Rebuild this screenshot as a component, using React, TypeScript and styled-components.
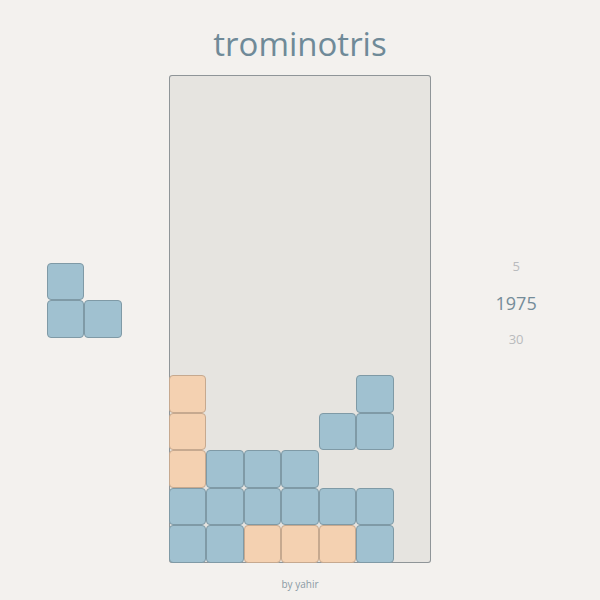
import React from 'react'
import styled, { createGlobalStyle } from 'styled-components'

const CELL = 37.5

type Kind = 'blue' | 'orange'

const board: { row: number; col: number; kind: Kind }[] = [
  { row: 8, col: 0, kind: 'orange' },
  { row: 8, col: 5, kind: 'blue' },
  { row: 9, col: 0, kind: 'orange' },
  { row: 9, col: 4, kind: 'blue' },
  { row: 9, col: 5, kind: 'blue' },
  { row: 10, col: 0, kind: 'orange' },
  { row: 10, col: 1, kind: 'blue' },
  { row: 10, col: 2, kind: 'blue' },
  { row: 10, col: 3, kind: 'blue' },
  { row: 11, col: 0, kind: 'blue' },
  { row: 11, col: 1, kind: 'blue' },
  { row: 11, col: 2, kind: 'blue' },
  { row: 11, col: 3, kind: 'blue' },
  { row: 11, col: 4, kind: 'blue' },
  { row: 11, col: 5, kind: 'blue' },
  { row: 12, col: 0, kind: 'blue' },
  { row: 12, col: 1, kind: 'blue' },
  { row: 12, col: 2, kind: 'orange' },
  { row: 12, col: 3, kind: 'orange' },
  { row: 12, col: 4, kind: 'orange' },
  { row: 12, col: 5, kind: 'blue' },
]

const next: { row: number; col: number }[] = [
  { row: 0, col: 0 },
  { row: 1, col: 0 },
  { row: 1, col: 1 },
]

const GlobalStyle = createGlobalStyle`
  html, body {
    margin: 0;
    padding: 0;
    background: #f3f1ee;
    font-family: "Open Sans", "Noto Sans", sans-serif;
  }
`

const Page = styled.div`
  display: grid;
  grid-template-columns: 1fr 262.5px 1fr;
  height: 600px;
`

const Middle = styled.div`
  display: flex;
  flex-direction: column;
  align-items: center;
`

const Title = styled.h1`
  margin: 0;
  height: 75px;
  line-height: 88px;
  font-size: 33px;
  font-weight: 400;
  color: #6f8a98;
`

const Board = styled.div`
  width: 262.5px;
  height: 487.5px;
  background: #e6e4e0;
  box-shadow: inset 0 0 0 1px #8f9598;
  border-radius: 3px;
  display: grid;
  grid-template-columns: repeat(7, ${CELL}px);
  grid-template-rows: repeat(13, ${CELL}px);
`

const Cell = styled.div<{ $kind: Kind }>`
  box-sizing: border-box;
  border-radius: 4px;
  background: ${p => (p.$kind === 'blue' ? '#a0c1d0' : '#f4d1b1')};
  border: 1px solid ${p => (p.$kind === 'blue' ? '#7f9aa6' : '#c6a98f')};
`

const Footer = styled.div`
  margin-top: 14px;
  font-size: 10px;
  color: #8a9aa4;
`

const Side = styled.div`
  align-self: center;
  justify-self: center;
`

const Preview = styled.div`
  display: grid;
  grid-template-columns: repeat(2, ${CELL}px);
  grid-template-rows: repeat(2, ${CELL}px);
`

const Stats = styled.div`
  display: flex;
  flex-direction: column;
  align-items: center;
  gap: 18px;
  margin-top: 7px;
  margin-left: 1px;
`

const Stat = styled.div<{ $main?: boolean }>`
  font-size: ${p => (p.$main ? '18px' : '13px')};
  color: ${p => (p.$main ? '#748c99' : '#b9bbbd')};
  line-height: 1.2;
`

export default function App() {
  return (
    <>
      <GlobalStyle />
      <Page>
        <Side>
          <Preview>
            {next.map((c, i) => (
              <Cell
                key={i}
                $kind="blue"
                style={{ gridRow: c.row + 1, gridColumn: c.col + 1 }}
              />
            ))}
          </Preview>
        </Side>
        <Middle>
          <Title>trominotris</Title>
          <Board>
            {board.map((c, i) => (
              <Cell
                key={i}
                $kind={c.kind}
                style={{ gridRow: c.row + 1, gridColumn: c.col + 1 }}
              />
            ))}
          </Board>
          <Footer>by yahir</Footer>
        </Middle>
        <Side>
          <Stats>
            <Stat>5</Stat>
            <Stat $main>1975</Stat>
            <Stat>30</Stat>
          </Stats>
        </Side>
      </Page>
    </>
  )
}
